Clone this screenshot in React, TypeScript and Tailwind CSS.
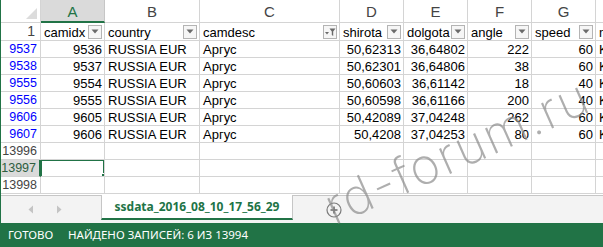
import React from "react";

type Row = {
  n: string;
  cells: string[];
  filtered?: boolean;
  selected?: boolean;
};

// widths of columns A..H (px), right border included
const colW = ["w-[64px]", "w-[95px]", "w-[140px]", "w-[64px]", "w-[64px]", "w-[64px]", "w-[64px]", "w-[64px]"];
const letters = ["A", "B", "C", "D", "E", "F", "G", "H"];
const numeric = [true, false, false, true, true, true, true, false];
const titles = ["camidx", "country", "camdesc", "shirota", "dolgota", "angle", "speed", "name"];

const rows: Row[] = [
  { n: "9537", filtered: true, cells: ["9536", "RUSSIA EUR", "Аргус", "50,62313", "36,64802", "222", "60", "K"] },
  { n: "9538", filtered: true, cells: ["9537", "RUSSIA EUR", "Аргус", "50,62301", "36,64806", "38", "60", "K"] },
  { n: "9555", filtered: true, cells: ["9554", "RUSSIA EUR", "Аргус", "50,60603", "36,61142", "18", "40", "K"] },
  { n: "9556", filtered: true, cells: ["9555", "RUSSIA EUR", "Аргус", "50,60598", "36,61166", "200", "40", "K"] },
  { n: "9606", filtered: true, cells: ["9605", "RUSSIA EUR", "Аргус", "50,42089", "37,04248", "262", "60", "K"] },
  { n: "9607", filtered: true, cells: ["9606", "RUSSIA EUR", "Аргус", "50,4208", "37,04253", "80", "60", "K"] },
  { n: "13996", cells: ["", "", "", "", "", "", "", ""] },
  { n: "13997", selected: true, cells: ["", "", "", "", "", "", "", ""] },
  { n: "13998", cells: ["", "", "", "", "", "", "", ""] },
];

const DropBtn = ({ filter }: { filter?: boolean }) => (
  <div className="w-[14px] h-[14px] shrink-0 border border-[#b4b4b4] bg-[#f6f6f6] flex items-center justify-center">
    {filter ? (
      <svg width="12" height="10" viewBox="0 0 12 10">
        <path d="M1 5h4l-2 2.5z" fill="#6a6a6a" />
        <path d="M5.5 1.5h6l-2.3 3v4.5l-1.4-1v-3.5z" fill="#6a6a6a" />
      </svg>
    ) : (
      <svg width="8" height="5" viewBox="0 0 8 5">
        <path d="M0.5 0.5h7l-3.5 4z" fill="#6a6a6a" />
      </svg>
    )}
  </div>
);

export default function App() {
  return (
    <div className="w-[603px] h-[247px] overflow-hidden flex flex-col bg-white border-l border-[#217346] font-['Liberation_Sans',Arial,sans-serif] relative">
      {/* sheet */}
      <div className="h-[195px] overflow-hidden flex flex-col">
        {/* column letters */}
        <div className="flex h-[23px] shrink-0">
          <div className="w-[40px] shrink-0 h-full border-r border-b border-[#d4d4d4] flex items-end justify-end p-[3px]">
            <svg width="11" height="11" viewBox="0 0 11 11">
              <path d="M11 0v11H0z" fill="#dcdcdc" />
            </svg>
          </div>
          {letters.map((l, i) => (
            <div
              key={l}
              className={`${colW[i]} shrink-0 h-full flex items-center justify-center pt-[3px] text-[15px] ${
                i === 0
                  ? "bg-[#dadada] text-[#217346] border-b-2 border-b-[#217346] border-r border-r-[#c6c6c6]"
                  : "text-[#444] border-r border-b border-[#d4d4d4]"
              }`}
            >
              {l}
            </div>
          ))}
        </div>

        {/* row 1: table titles */}
        <div className="flex h-[18px] shrink-0 text-[13px] text-black">
          <div className="w-[40px] shrink-0 h-full border-r border-b border-[#d4d4d4] flex items-center justify-end pr-[5px] text-[14px] text-[#444]">
            1
          </div>
          {titles.map((t, i) => (
            <div
              key={t}
              className={`${colW[i]} shrink-0 h-full border-r border-b border-[#d4d4d4] flex items-center justify-between pl-[3px] pr-[2px] overflow-hidden`}
            >
              <span className="pt-[2px]">{t}</span>
              {i < 7 && <DropBtn filter={i === 2} />}
            </div>
          ))}
        </div>

        {rows.map((r) => (
          <div key={r.n} className="flex h-[17px] shrink-0 text-[13px] text-black">
            <div
              className={`w-[40px] shrink-0 h-full border-b border-[#d4d4d4] flex items-center justify-end pr-[3px] text-[12.5px] ${
                r.filtered ? "text-[#0000ff]" : r.selected ? "text-[#2f5e3f] bg-[#dadada]" : "text-[#444]"
              } ${r.selected ? "border-r-2 border-r-[#217346] pr-[2px]" : "border-r"}`}
            >
              {r.n}
            </div>
            {r.cells.map((c, i) => (
              <div
                key={i}
                className={`${colW[i]} shrink-0 h-full border-r border-b border-[#d4d4d4] flex items-center overflow-hidden whitespace-nowrap relative ${
                  numeric[i] ? "justify-end pr-[2px]" : "justify-start pl-[3px]"
                }`}
              >
                <span className="pt-[1px]">{c}</span>
                {r.selected && i === 0 && (
                  <>
                    <div className="absolute -left-[1px] -top-[1px] w-[65px] h-[19px] border-2 border-[#217346]" />
                    <div className="absolute -right-[3px] -bottom-[3px] w-[6px] h-[6px] bg-[#217346] border border-white" />
                  </>
                )}
              </div>
            ))}
          </div>
        ))}
      </div>

      {/* sheet tabs */}
      <div className="h-[28px] shrink-0 bg-[#f3f3f3] border-t border-[#c6c6c6] flex items-stretch">
        <div className="w-[100px] shrink-0 flex items-center pl-[27px] gap-[22px]">
          <svg width="6" height="9" viewBox="0 0 6 9">
            <path d="M5 0.5v8L0.5 4.5z" fill="#c4c4c4" />
          </svg>
          <svg width="6" height="9" viewBox="0 0 6 9">
            <path d="M1 0.5v8l4.5-4z" fill="#c4c4c4" />
          </svg>
        </div>
        <div className="w-[192px] shrink-0 -mt-[1px] mb-[3px] bg-white border-x border-[#c6c6c6] border-b-2 border-b-[#217346] flex items-center justify-center font-['Noto_Sans',sans-serif] font-bold text-[12px] text-[#217346]">
          ssdata_2016_08_10_17_56_29
        </div>
        <div className="flex items-center pl-[33px]">
          <svg width="16" height="16" viewBox="0 0 16 16">
            <circle cx="8" cy="8" r="7" fill="none" stroke="#7a7a7a" strokeWidth="1.2" />
            <path d="M8 4.5v7M4.5 8h7" stroke="#6a6a6a" strokeWidth="1.6" />
          </svg>
        </div>
      </div>

      {/* status bar */}
      <div className="h-[24px] shrink-0 bg-[#217346] flex items-center text-white text-[11.5px] font-['Noto_Sans',sans-serif] pl-[7px]">
        <span className="w-[60px]">ГОТОВО</span>
        <span>НАЙДЕНО ЗАПИСЕЙ: 6 ИЗ 13994</span>
      </div>

      {/* watermark */}
      <span className="absolute left-[336px] top-[182px] origin-bottom-left -rotate-[24deg] text-[50px] leading-none font-['Inter',sans-serif] font-extralight text-[#8c8c8c]/70 tracking-[2px] pointer-events-none whitespace-nowrap">
        rd-forum.ru
      </span>
    </div>
  );
}
